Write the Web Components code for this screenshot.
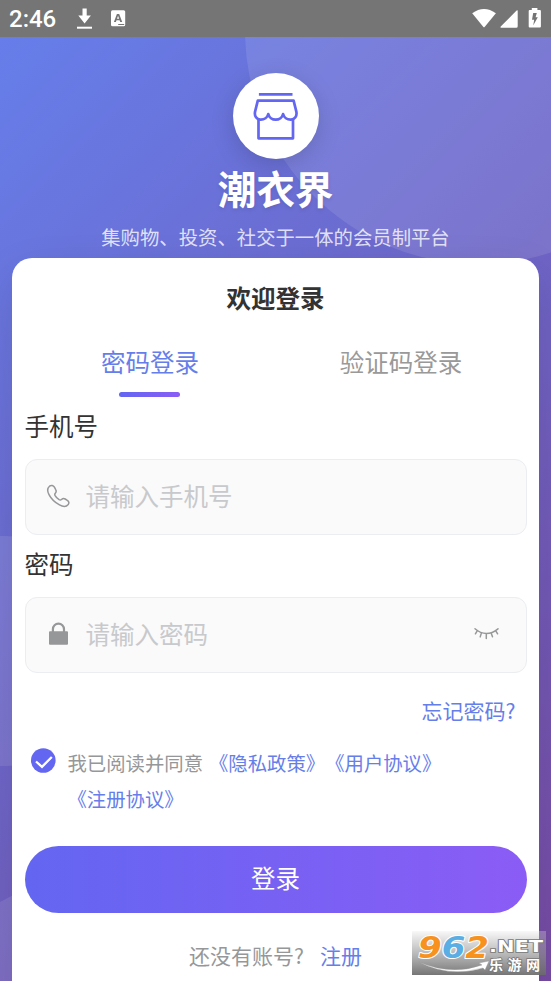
<!DOCTYPE html>
<html lang="zh-CN">
<head>
<meta charset="utf-8">
<title>潮衣界</title>
<style>
html,body{margin:0;padding:0}
body{width:551px;height:981px;overflow:hidden;font-family:"Noto Sans CJK SC",sans-serif;color:#333;text-spacing-trim:space-all}
</style>
</head>
<body>
<login-page></login-page>
<script>
const define = (name, html) => {
  const t = document.createElement('template');
  t.innerHTML = html;
  customElements.define(name, class extends HTMLElement {
    constructor() {
      super();
      this.attachShadow({mode: 'open'}).appendChild(t.content.cloneNode(true));
    }
  });
};

define('status-bar', `
<style>
:host{display:flex;box-sizing:border-box;height:37px;background:#757575;color:#fff;align-items:center;padding:0 9px;position:relative}
.t{font:500 24px/37px Roboto,sans-serif;width:67px;padding-top:1px}
svg{display:block;fill:#fff}
.sp{flex:1}
</style>
<span class="t">2:46</span>
<svg width="60" height="37" viewBox="76 0 60 37"><path d="M82.500 8.500h4.200v7h4.200l-6.300 8-6.300-8h4.200z"/><path d="M77 26.700h15v2H77z"/><rect x="111" y="10.300" width="14.200" height="16" rx="1.500"/><path d="M116.900 14h2.300l3 8h-2l-.6-1.700h-3.100l-.6 1.700h-2zM117 18.800h2.100l-1.050-3zM118.200 24h6v1h-6z" fill="#757575" fill-rule="evenodd"/></svg>
<span class="sp"></span>
<svg width="72" height="37" viewBox="470 0 72 37"><path d="M472.200 13.200Q484 4.600 495.900 13.200L484.600 27Q484 27.600 483.400 27z"/><path d="M517.700 11v15.200q0 1.500-1.500 1.500H501q-1-.2-.3-1.200L516.600 10.600q1.100-.8 1.100.4z"/><path d="M531.800 8h5.600v2h2.500q1 0 1 1v15.600q0 1-1 1h-10.200q-1 0-1-1V11q0-1 1-1h2.100z"/><path d="M533.200 13h3.600l-1.200 4.200h2.200l-4.600 8.300 1-5.800h-2.200z" fill="#757575"/></svg>`);

define('page-backdrop', `
<style>
:host{display:block;position:absolute;inset:0;overflow:hidden;background:linear-gradient(135deg,#667eea 0%,#764ba2 100%)}
i{position:absolute;border-radius:50%;background:rgba(255,255,255,.1)}
.a{left:244.500px;top:-240.500px;width:467px;height:467px}
.b{left:-110px;top:499px;width:230px;height:230px}
.c{left:-73px;top:845px;width:294px;height:294px}
</style><i class="a"></i><i class="b"></i><i class="c"></i>`);

define('brand-header', `
<style>
:host{display:flex;flex-direction:column;align-items:center;height:221px;box-sizing:border-box;padding-top:36px;position:relative}
.logo{width:86px;height:86px;border-radius:50%;background:#fff;box-shadow:0 6px 23px rgba(0,0,0,.15)}
svg{display:block}
h1{margin:-2px 0 0;font-size:38.600px;line-height:60px;font-weight:700;color:#fff;text-shadow:0 2px 4px rgba(0,0,0,.1);height:64px}
p{margin:0;font-size:19.370px;line-height:32px;color:rgba(255,255,255,.8);white-space:nowrap}
</style>
<div class="logo"><svg width="86" height="86" viewBox="232.800 72.700 86 86" fill="none" stroke="#6366f1" stroke-width="2.700" stroke-linejoin="round"><path d="M258.700 94h33.600"/><path d="M257.600 100.400h35.800l2.800 11.200c.7 4-1.600 7.600-5.300 7.800-4 .2-7.100-2.300-8-5.600-.8 3.200-3.900 5.600-7.400 5.600s-6.600-2.400-7.400-5.600c-.9 3.300-4 5.800-8 5.600-3.700-.2-6-3.800-5.300-7.800z"/><path d="M258.300 119.500v18.500h34.500v-18.500"/></svg></div>
<h1><slot name="title"></slot></h1><p><slot name="tagline"></slot></p>`);

define('login-tab', `
<style>
:host{flex:1;display:flex;flex-direction:column;align-items:center;font-size:24.500px;line-height:36px;color:#999}
:host([active]){color:#667eea}
:host([active])::after{content:"";width:61px;height:5px;border-radius:3px;background:linear-gradient(90deg,#6366f1,#8b5cf6);margin-top:12px;margin-left:-1px}
</style><slot></slot>`);

define('form-field', `
<style>
:host{display:block;height:138px}
label{display:block;font-size:24.500px;line-height:36px;height:51px;color:#333}
.box{display:flex;align-items:center;box-sizing:border-box;height:76px;border:1.500px solid #ebedf0;border-radius:12px;background:#fafafa;padding:0 26px 2px 19px}
.ph{flex:1;font-size:24.500px;line-height:36px;color:#c8c9cc;padding-left:15px;margin-top:-1px}
</style>
<label><slot name="label"></slot></label>
<div class="box"><slot name="icon"></slot><span class="ph"><slot></slot></span><slot name="action"></slot></div>`);

const iconStyle = '<style>:host{display:block}svg{display:block}</style>';
define('phone-icon', iconStyle + `<svg width="26" height="26" viewBox="45 483 26 26" fill="none" stroke="#969799" stroke-width="1.500" stroke-linejoin="round"><path d="M49.500 486.200c1.800-1.400 3.800-.9 4.900 1l1.300 2.400c.8 1.400.5 2.700-.4 3.700-.7.800-.7 1.500-.2 2.400 1 1.700 2.300 3 4 4 .9.500 1.600.5 2.400-.2 1.200-1.100 2.400-1.300 3.700-.5l2.100 1.300c1.700 1.100 2 2.700.9 4.200-2 2.500-5.300 2.300-8.700.4-4.800-2.600-8.200-5.900-10.500-10.300-1.800-3.400-1.700-6.500.5-8.400z"/></svg>`);
define('lock-icon', iconStyle + `<svg width="26" height="26" viewBox="45 621 26 26"><path d="M52.900 632v-2.800a5.550 5.550 0 0 1 11.100 0v2.800" fill="none" stroke="#969799" stroke-width="2.200"/><rect x="49" y="631.300" width="19" height="13.500" rx="1" fill="#969799"/></svg>`);
define('eye-closed-icon', iconStyle + `<svg width="28" height="26" viewBox="472 621 28 26" fill="none" stroke="#969799" stroke-width="1.500" stroke-linecap="round"><path d="M475 628.800q11.200 9.400 23 0M477.200 630.800l-1.800 3M481.400 633l-1.200 3.900M486.300 634v4.600M491.200 633.200l1.300 3.600M495.800 630.800l1.800 3"/></svg>`);

define('agreement-row', `
<style>
:host{display:flex;height:101px;box-sizing:border-box;padding-left:6px}
svg{display:block;margin-top:2.500px}
.t{margin-left:12px;font-size:19.370px;line-height:36px;color:#969799;white-space:nowrap}
.t span{color:#667eea}.t .f{margin-left:6px}.t div{height:36px}
</style>
<svg width="25" height="25" viewBox="0 0 25 25"><circle cx="12.300" cy="12.500" r="12.300" fill="#6366f1"/><path d="M5 13.500l6 5.300L20.800 9" fill="none" stroke="#fff" stroke-width="2.300"/></svg>
<div class="t"><div>我已阅读并同意<span class="f">《隐私政策》</span><span>《用户协议》</span></div><div><span>《注册协议》</span></div></div>`);

define('primary-button', `
<style>
:host{display:flex;align-items:center;justify-content:center;height:67px;border-radius:34px;background:linear-gradient(90deg,#6366f1,#8b5cf6);color:#fff;font-size:24.500px;line-height:36px}
span{margin-top:-3px}
</style><span><slot></slot></span>`);

define('login-card', `
<style>
:host{display:block;box-sizing:border-box;margin:0 12px;height:760px;background:#fff;border-radius:20px;padding:0 12.500px;box-shadow:0 15px 44px rgba(0,0,0,.1);position:relative}
h2{margin:0;padding-top:22px;text-align:center;font-size:24.500px;line-height:36px;font-weight:700;color:#333}
.tabs{display:flex;margin-top:28px;height:64px}
.forgot{text-align:right;font-size:21px;line-height:32px;height:38px;color:#667eea;margin-top:10px;padding-right:11px}
.agree{padding-top:13px}
.reg{display:flex;justify-content:center;font-size:21px;line-height:32px;margin-top:26px;color:#969799;gap:16px}
.reg b{font-weight:400;color:#667eea}
</style>
<h2>欢迎登录</h2>
<div class="tabs"><login-tab active>密码登录</login-tab><login-tab>验证码登录</login-tab></div>
<form-field><span slot="label">手机号</span><phone-icon slot="icon"></phone-icon>请输入手机号</form-field>
<form-field><span slot="label">密码</span><lock-icon slot="icon"></lock-icon>请输入密码<eye-closed-icon slot="action"></eye-closed-icon></form-field>
<div class="forgot">忘记密码?</div>
<div class="agree"><agreement-row></agreement-row></div>
<primary-button>登录</primary-button>
<div class="reg"><span>还没有账号?</span><b>注册</b></div>`);

define('site-watermark', `
<style>:host{display:block;position:absolute;left:412px;top:931px;width:134px;height:44px}svg{display:block;margin-top:-8px}</style>
<svg width="134" height="52" viewBox="0 -8 134 52">
<defs><linearGradient id="g" x2="0" y2="1"><stop offset="0" stop-color="#777" stop-opacity=".05"/><stop offset=".5" stop-color="#777" stop-opacity=".5"/><stop offset="1" stop-color="#666" stop-opacity=".9"/></linearGradient></defs>
<rect width="134" height="44" fill="#fff" fill-opacity=".25"/><rect width="134" height="44" fill="url(#g)"/>
<text x="6" y="26.500" textLength="71" lengthAdjust="spacingAndGlyphs" font-family="DejaVu Sans" font-weight="700" font-style="italic" font-size="30" stroke="#fff" stroke-width="2" paint-order="stroke" stroke-linejoin="round"><tspan fill="#f7921e">9</tspan><tspan fill="#5aaee4">6</tspan><tspan fill="#f7921e">2</tspan></text>
<path d="M7 31q32 14 63 3l-3-2 10-2-4 9-2-2Q37 47 7 31z" fill="#fff" stroke="#999" stroke-width=".4"/>
<g fill="#fff" stroke="#777" stroke-width="1.600" paint-order="stroke" font-weight="700"><text x="77" y="20.500" font-family="DejaVu Sans" font-size="16" textLength="54" lengthAdjust="spacingAndGlyphs">.NET</text><text x="77" y="38.500" font-family="Noto Sans CJK SC" font-size="14" textLength="51">乐游网</text></g>
</svg>`);

define('login-page', `
<style>:host{display:flex;flex-direction:column;position:relative;width:551px;height:981px;overflow:hidden}
main{position:relative;height:944px;flex:none}</style>
<status-bar></status-bar>
<main><page-backdrop></page-backdrop>
<brand-header><span slot="title">潮衣界</span><span slot="tagline">集购物、投资、社交于一体的会员制平台</span></brand-header>
<login-card></login-card></main>
<site-watermark></site-watermark>`);
</script>
</body>
</html>
